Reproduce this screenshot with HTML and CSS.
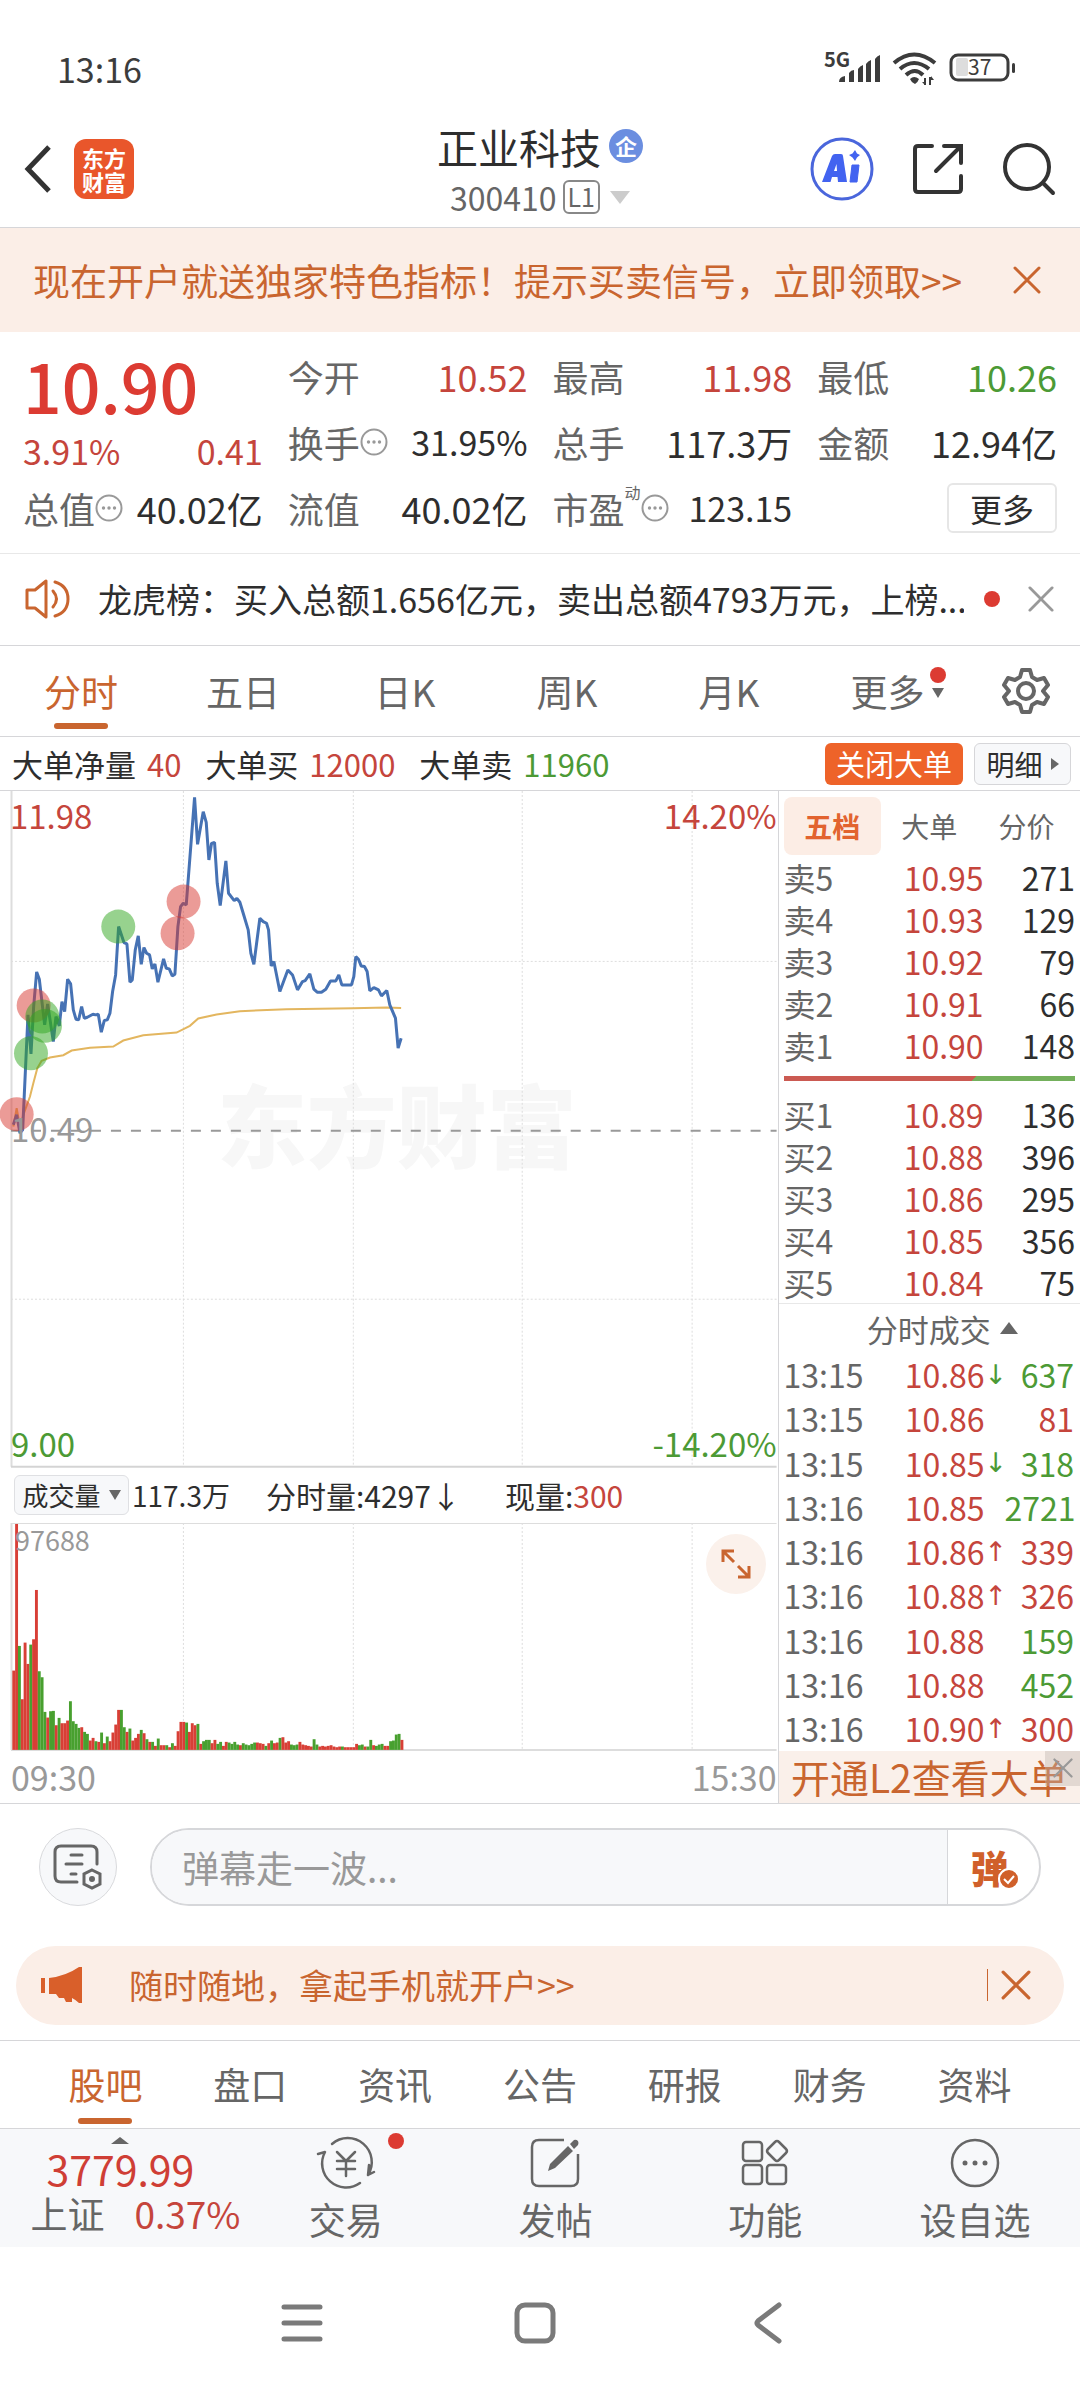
FILE: index.html
```html
<!DOCTYPE html>
<html lang="zh-CN">
<head>
<meta charset="utf-8">
<meta name="viewport" content="width=device-width">
<title>正业科技 300410</title>
<link rel="stylesheet" href="styles.css">
</head>
<body>
<svg class="defs" aria-hidden="true">
  <symbol id="more-dots" viewBox="0 0 28 28"><circle cx="14" cy="14" r="12.5" fill="none" stroke="#999" stroke-width="2"/><g fill="#999"><circle cx="8.500" cy="14" r="1.700"/><circle cx="14" cy="14" r="1.700"/><circle cx="19.500" cy="14" r="1.700"/></g></symbol>
  <symbol id="cross" viewBox="0 0 28 28"><path d="M2 2L26 26M26 2L2 26" fill="none" stroke="currentColor" stroke-width="3" stroke-linecap="round"/></symbol>
</svg>

<div class="status">
  <span class="clock">13:16</span>
  <svg class="status-icons" viewBox="0 0 196 34" aria-label="5G 信号，电量 37">
    <text x="0" y="15" class="sig-text">5G</text>
    <g fill="#3c3c3c">
      <path d="M15 30q0-5 6-6v6zM25 30v-9q2-3 5-3v12zM34 30v-13q2-3 5-4v17zM42 30v-18q2-3 5-4v22zM51 30v-23q2-3 5-4v27z"/>
      <path d="M86 27q4-4 9 0q-1 3-4 5q-4-2-5-5z"/>
      <path d="M100 26h2v7h-2zM105 25h2v8h-2zM98 30h3v3zM107 24l3 4h-3z"/>
      <rect x="188" y="11" width="3" height="10" rx="1.500"/>
    </g>
    <g fill="none" stroke="#3c3c3c" stroke-width="4">
      <path d="M70 11Q90-6 111 11M76 17Q90 5 105 17M82 23Q91 15 99 23"/>
    </g>
    <rect x="132" y="6" width="12" height="18" rx="2" fill="#ddd"/>
    <rect x="127" y="3" width="57" height="25" rx="7" fill="none" stroke="#3c3c3c" stroke-width="3"/>
    <text x="144" y="23" class="bat-text">37</text>
  </svg>
</div>

<header class="header">
  <div class="header-left">
    <button class="icon-btn" aria-label="返回"><svg width="30" height="50" viewBox="0 0 30 50"><path d="M25 3L4 25L25 47" fill="none" stroke="#333" stroke-width="5"/></svg></button>
    <a href="#" class="logo">东方<br>财富</a>
  </div>
  <div class="title">
    <h1>正业科技<span class="corp">企</span></h1>
    <button class="code">300410<span class="level">L1</span><i class="caret"></i></button>
  </div>
  <div class="header-right">
    <button class="icon-btn" aria-label="Ai"><svg width="64" height="64" viewBox="0 0 64 64"><circle cx="32" cy="32" r="30" fill="#fff" stroke="#4a66dc" stroke-width="3"/><g fill="#4263f0" stroke="#4263f0" stroke-linejoin="round"><path stroke="none" fill-rule="evenodd" d="M12 45L22 19Q23 17 25 17H31Q33 17 33 19L37 45H28L27.500 40H22L20.500 45zM24 34H27L26.500 27z"/><path d="M42 28H49L47 45H40z"/><path stroke="none" d="M45 13L47 16.500L50 18L47 20.500L45 24L42.500 20.500L39 18L42.500 16.500z"/></g></svg></button>
    <button class="icon-btn" aria-label="分享"><svg width="52" height="52" viewBox="0 0 52 52"><path d="M20 3H6Q3 3 3 6V46Q3 49 6 49H46Q49 49 49 46V33M32 3H49V20M49 3L24 28" fill="none" stroke="#333" stroke-width="4" stroke-linecap="round"/></svg></button>
    <button class="icon-btn" aria-label="搜索"><svg width="54" height="54" viewBox="0 0 54 54"><circle cx="25" cy="25" r="22" fill="none" stroke="#333" stroke-width="4"/><path d="M41 41L51 51" stroke="#333" stroke-width="4" stroke-linecap="round"/></svg></button>
  </div>
</header>

<aside class="banner">
  <a href="#">现在开户就送独家特色指标！提示买卖信号，立即领取&gt;&gt;</a>
  <button class="icon-btn" aria-label="关闭"><svg width="28" height="28"><use href="#cross"/></svg></button>
</aside>

<section class="quote">
  <div class="quote-main">
    <strong class="price">10.90</strong>
    <div class="item change up"><span>3.91%</span><span>0.41</span></div>
    <div class="item"><span class="k">总值<svg class="dots"><use href="#more-dots"/></svg></span><span>40.02亿</span></div>
  </div>
  <div class="quote-col">
    <div class="item"><span class="k">今开</span><span class="up">10.52</span></div>
    <div class="item"><span class="k">换手<svg class="dots"><use href="#more-dots"/></svg></span><span class="pct">31.95%</span></div>
    <div class="item"><span class="k">流值</span><span>40.02亿</span></div>
  </div>
  <div class="quote-col">
    <div class="item"><span class="k">最高</span><span class="up">11.98</span></div>
    <div class="item"><span class="k">总手</span><span>117.3万</span></div>
    <div class="item"><span class="k">市盈<sup>动</sup><svg class="dots"><use href="#more-dots"/></svg></span><span class="pct">123.15</span></div>
  </div>
  <div class="quote-col">
    <div class="item"><span class="k">最低</span><span class="down">10.26</span></div>
    <div class="item"><span class="k">金额</span><span>12.94亿</span></div>
    <div class="item end"><button class="more-btn">更多</button></div>
  </div>
</section>

<section class="news">
  <svg width="46" height="40" viewBox="0 0 46 40" fill="none" stroke="#c9652f" stroke-width="3" stroke-linejoin="round" stroke-linecap="round"><path d="M2 11H10L21 2V38L10 29H2zM28 12Q35 20 28 28M30 3Q43 7 43 20Q43 33 30 37"/></svg>
  <a href="#">龙虎榜：买入总额1.656亿元，卖出总额4793万元，上榜...</a>
  <i class="dot"></i>
  <button class="icon-btn grey" aria-label="关闭"><svg width="26" height="26"><use href="#cross"/></svg></button>
</section>

<nav class="periods">
  <button class="on">分时</button><button>五日</button><button>日K</button><button>周K</button><button>月K</button>
  <button><span class="more-tab">更多<span class="more-marks"><i class="dot"></i><i class="tri"></i></span></span></button>
  <button class="gear" aria-label="设置"><svg width="48" height="48" viewBox="0 0 48 48" fill="none" stroke="#666" stroke-width="4" stroke-linejoin="round"><path d="M20 3H28L30 10L35 13L42 11L46 18L41 24L46 30L42 37L35 35L30 38L28 45H20L18 38L13 35L6 37L2 30L7 24L2 18L6 11L13 13L18 10z"/><circle cx="24" cy="24" r="8"/></svg></button>
</nav>

<section class="big-orders">
  <span>大单净量 <b class="up">40</b></span>
  <span>大单买 <b class="up">12000</b></span>
  <span>大单卖 <b class="down">11960</b></span>
  <button class="btn-close-big">关闭大单</button>
  <button class="btn-detail">明细<i class="tri-right"></i></button>
</section>

<main class="board">
  <div class="charts">
    <svg class="price-chart" viewBox="0 0 778 677" role="img" aria-label="分时走势">
      <text x="397" y="370" class="watermark">东方财富</text>
      <g stroke="#ddd" stroke-width="1" stroke-dasharray="2 2">
        <path d="M183.500 0V676M353.500 0V676M522.500 0V676M692.500 0V676M11 170.500H777M11 508.500H777"/>
      </g>
      <path d="M11.500 0V676" stroke="#ddd" stroke-width="2"/><path d="M11 676H777" stroke="#d4d4d4" stroke-width="2"/>
      <path d="M11 340H777" stroke="#999" stroke-width="2" stroke-dasharray="10 10"/>
      <g transform="translate(0,-11) scale(0.33333)">
        <polyline fill="none" stroke="#e3b65f" stroke-width="6" points="40,1040 50,985 60,1040 72,1000 90,950 100,910 112,865 125,843 150,833 190,826 215,812 270,804 340,800 370,782 430,766 530,758 570,738 595,716 650,704 720,694 860,688 1060,685 1160,683 1204,684"/>
        <polyline fill="none" stroke="#4672b4" stroke-width="9" stroke-linejoin="bevel" points="40,1035 50,1005 60,1060 68,1050 84,705 93,822 101,680 110,576 118,598 134,735 143,672 160,785 168,710 178,738 186,665 194,695 203,598 212,612 220,690 228,718 236,720 245,680 253,715 262,712 279,703 287,705 295,703 304,757 313,722 322,720 330,700 338,635 347,585 356,440 372,488 381,492 390,607 397,600 406,510 415,468 424,553 432,503 440,520 449,525 457,567 465,552 474,607 491,537 499,565 508,567 517,588 525,583 534,440 542,380 550,370 559,375 584,52 593,193 610,95 619,127 627,240 635,190 644,187 652,310 661,377 678,243 686,340 703,362 711,355 720,367 730,400 745,450 753,520 762,553 780,415 790,425 800,430 806,450 814,558 822,545 840,635 864,570 878,585 893,630 908,605 916,602 930,582 942,628 952,637 965,637 978,628 992,603 1008,603 1017,585 1026,615 1055,615 1062,590 1068,530 1076,538 1084,558 1094,560 1102,575 1110,633 1122,623 1136,630 1145,648 1161,632 1170,675 1187,715 1195,805 1204,775"/>
        <g fill="#d8372f" fill-opacity=".5"><circle cx="50" cy="1003" r="51"/><circle cx="101" cy="677" r="51"/><circle cx="551" cy="365" r="51"/><circle cx="533" cy="460" r="51"/></g>
        <g fill="#2fa51e" fill-opacity=".5"><circle cx="355" cy="440" r="51"/><circle cx="127" cy="710" r="51"/><circle cx="135" cy="738" r="51"/><circle cx="93" cy="820" r="51"/></g>
      </g>
      <text x="10" y="38" class="t-up">11.98</text>
      <text x="777" y="38" class="t-up t-end">14.20%</text>
      <text x="11" y="351" class="t-mid">10.49</text>
      <text x="11" y="666" class="t-down">9.00</text>
      <text x="777" y="666" class="t-down t-end">-14.20%</text>
    </svg>
    <div class="vol-head">
      <button class="vol-select">成交量<i class="tri"></i></button>
      <span class="vol-total">117.3万</span><span class="vol-min">分时量:4297↓</span><span>现量:<b class="up">300</b></span>
    </div>
    <div class="vol-wrap">
      <svg class="vol-chart" viewBox="0 0 778 228" role="img" aria-label="成交量">
        <g stroke="#ddd" stroke-width="1" stroke-dasharray="2 2"><path d="M183.500 0V227M353.500 0V227M522.500 0V227M692.500 0V227"/></g>
        <path d="M11 .5H777" stroke="#ddd"/><path d="M11.500 0V227M11 227H777" stroke="#ddd" stroke-width="2" fill="none"/>
        <g id="bars"></g>
        <text x="15" y="28" class="t-vol">97688</text>
      </svg>
      <button class="expand" aria-label="展开"><svg width="32" height="32" viewBox="0 0 32 32" fill="none" stroke="#c9652f" stroke-width="3"><path d="M14 3H3V14M3 3L14 14M18 29H29V18M29 29L18 18"/></svg></button>
    </div>
    <div class="axis"><span>09:30</span><span>15:30</span></div>
  </div>

  <div class="panel">
    <div class="panel-tabs"><button class="on">五档</button><button>大单</button><button>分价</button></div>
    <table class="book">
      <tr><th>卖5</th><td class="up">10.95</td><td>271</td></tr>
      <tr><th>卖4</th><td class="up">10.93</td><td>129</td></tr>
      <tr><th>卖3</th><td class="up">10.92</td><td>79</td></tr>
      <tr><th>卖2</th><td class="up">10.91</td><td>66</td></tr>
      <tr><th>卖1</th><td class="up">10.90</td><td>148</td></tr>
    </table>
    <div class="ratio"></div>
    <table class="book">
      <tr><th>买1</th><td class="up">10.89</td><td>136</td></tr>
      <tr><th>买2</th><td class="up">10.88</td><td>396</td></tr>
      <tr><th>买3</th><td class="up">10.86</td><td>295</td></tr>
      <tr><th>买4</th><td class="up">10.85</td><td>356</td></tr>
      <tr><th>买5</th><td class="up">10.84</td><td>75</td></tr>
    </table>
    <button class="trades-head">分时成交<i class="tri-up"></i></button>
    <table class="trades">
      <tr><th>13:15</th><td class="up">10.86</td><td class="arrow down">↓</td><td class="down">637</td></tr>
      <tr><th>13:15</th><td class="up">10.86</td><td class="arrow"></td><td class="up">81</td></tr>
      <tr><th>13:15</th><td class="up">10.85</td><td class="arrow down">↓</td><td class="down">318</td></tr>
      <tr><th>13:16</th><td class="up">10.85</td><td class="arrow"></td><td class="down">2721</td></tr>
      <tr><th>13:16</th><td class="up">10.86</td><td class="arrow up">↑</td><td class="up">339</td></tr>
      <tr><th>13:16</th><td class="up">10.88</td><td class="arrow up">↑</td><td class="up">326</td></tr>
      <tr><th>13:16</th><td class="up">10.88</td><td class="arrow"></td><td class="down">159</td></tr>
      <tr><th>13:16</th><td class="up">10.88</td><td class="arrow"></td><td class="down">452</td></tr>
      <tr><th>13:16</th><td class="up">10.90</td><td class="arrow up">↑</td><td class="up">300</td></tr>
    </table>
    <div class="promo"><a href="#">开通L2查看大单</a><button class="promo-x" aria-label="关闭"><svg width="20" height="20"><use href="#cross"/></svg></button></div>
  </div>
</main>

<section class="danmu">
  <button class="danmu-set" aria-label="弹幕设置"><svg width="50" height="46" viewBox="0 0 50 46" fill="none" stroke="#666" stroke-width="3" stroke-linecap="round"><path d="M24 38H8Q2 38 2 32V8Q2 2 8 2H38Q44 2 44 8V20M18 11H29M13 20H29M18 30H23"/><path d="M39 26L47 30V40L39 44L31 40V30z"/><circle cx="39" cy="35" r="1.500" fill="#666"/></svg></button>
  <div class="danmu-box">
    <input type="text" placeholder="弹幕走一波..." aria-label="弹幕">
    <button class="danmu-toggle" aria-label="弹幕开关">弹<svg class="check" width="22" height="22" viewBox="0 0 22 22"><circle cx="11" cy="11" r="10" fill="#d0602a" stroke="#fff" stroke-width="2"/><path d="M6 11L10 15L16 8" fill="none" stroke="#fff" stroke-width="2"/></svg></button>
  </div>
</section>

<aside class="open-account">
  <svg width="42" height="36" viewBox="0 0 42 36" fill="#d95f2a"><path d="M0 11H4V26H0zM8 11Q25 9 38 0H41V36H38Q35 33 31 31V35H25L23 31H18L15 27H8z"/></svg>
  <a href="#">随时随地，拿起手机就开户&gt;&gt;</a>
  <button class="icon-btn" aria-label="关闭"><svg width="30" height="30"><use href="#cross"/></svg></button>
</aside>

<nav class="sections">
  <button class="on">股吧</button><button>盘口</button><button>资讯</button><button>公告</button><button>研报</button><button>财务</button><button>资料</button>
</nav>

<footer class="toolbar">
  <button class="index">
    <i class="tri-up"></i>
    <strong>3779.99</strong>
    <span class="index-row"><span>上证</span><span class="up">0.37%</span></span>
  </button>
  <button class="tool"><svg width="58" height="52" viewBox="0 0 58 52" fill="none" stroke="#666" stroke-width="2.500" stroke-linecap="round" stroke-linejoin="round"><path d="M15 7A24 24 0 0 1 51 38M51 38L57 35M51 38L52 28M43 46A24 24 0 0 1 8 15L1 17M20 15L29 24L38 15M29 24V39M20 24H38M20 32H38"/></svg>交易<i class="dot"></i></button>
  <button class="tool"><svg width="50" height="52" viewBox="0 0 50 52"><path d="M34 3H9Q2 3 2 10V42Q2 49 9 49H41Q48 49 48 42V17" fill="none" stroke="#666" stroke-width="2.500"/><path d="M18 34L20 27L38 9L43 14L25 31zM40 7L44 3Q46 2 48 4Q49 6 48 8L44 12z" fill="#666"/></svg>发帖</button>
  <button class="tool"><svg width="48" height="52" viewBox="0 0 48 52" fill="none" stroke="#666" stroke-width="2.500"><rect x="2" y="5" width="19" height="19" rx="3"/><rect x="2" y="28" width="19" height="19" rx="3"/><rect x="26" y="28" width="19" height="19" rx="3"/><path d="M34 5Q36 3 38 5L45 12Q47 14 45 16L38 23Q36 25 34 23L27 16Q25 14 27 12z"/></svg>功能</button>
  <button class="tool"><svg width="52" height="52" viewBox="0 0 52 52"><circle cx="26" cy="26" r="23" fill="none" stroke="#666" stroke-width="2.500"/><g fill="#666"><circle cx="16" cy="26" r="2.500"/><circle cx="26" cy="26" r="2.500"/><circle cx="36" cy="26" r="2.500"/></g></svg>设自选</button>
</footer>

<nav class="sysnav">
  <button class="icon-btn" aria-label="菜单"><svg width="42" height="42" viewBox="0 0 42 42"><path d="M3 5H39M3 21H39M3 37H39" stroke="#7a7a7a" stroke-width="5" stroke-linecap="round"/></svg></button>
  <button class="icon-btn" aria-label="主页"><svg width="42" height="42" viewBox="0 0 42 42"><rect x="3" y="3" width="36" height="36" rx="8" fill="none" stroke="#7a7a7a" stroke-width="5"/></svg></button>
  <button class="icon-btn" aria-label="返回"><svg width="42" height="42" viewBox="0 0 42 42"><path d="M32 3L11 19Q9 21 11 23L32 39" fill="none" stroke="#7a7a7a" stroke-width="5" stroke-linecap="round"/></svg></button>
</nav>
<script src="bars.js"></script>
</body>
</html>
```

FILE: styles.css
```css
* { box-sizing: border-box; }
body {
  margin: 0;
  background: #fff;
  color: #2e2e2e;
  font-family: "Noto Sans CJK SC", "Noto Sans", sans-serif;
  font-size: 36px;
  line-height: 1;
}
button, input { font: inherit; color: inherit; background: none; border: 0; padding: 0; margin: 0; }
button { cursor: pointer; white-space: nowrap; }
a { color: inherit; text-decoration: none; }
b { font-weight: 400; }
svg { display: block; flex: none; overflow: visible; }
.defs { position: absolute; width: 0; height: 0; }
.up { color: #c5453c; }
.down { color: #4c9a35; }
.icon-btn { display: flex; align-items: center; justify-content: center; }
.dot { width: 16px; height: 16px; border-radius: 50%; background: #dc3b32; flex: none; }

.tri, .tri-up, .caret, .tri-right { width: 0; height: 0; flex: none; border: 6px solid transparent; }
.tri { border-top: 10px solid #666; border-bottom: 0; }
.tri-up { border-width: 9px; border-top-width: 0; border-bottom: 12px solid #666; }
.caret { border-width: 10px; border-bottom-width: 0; border-top: 13px solid #ccc; }
.tri-right { border-left: 8px solid #666; border-right: 0; }

/* status bar */
.status { display: flex; justify-content: space-between; align-items: center; height: 111px; padding: 26px 60px 0 57px; color: #3c3c3c; }
.clock { font-size: 34px; }
.status-icons { width: 196px; height: 34px; }
.sig-text { font-size: 20px; font-weight: 700; fill: #3c3c3c; }
.bat-text { font-size: 21px; fill: #3c3c3c; }

/* header */
.header { display: grid; grid-template-columns: 1fr auto 1fr; align-items: center; height: 117px; padding: 0 24px; border-bottom: 1px solid #d6d6d9; }
.header-left, .header-right { display: flex; align-items: center; }
.header-left { gap: 20px; }
.header-right { justify-content: flex-end; gap: 38px; }
.logo { display: grid; place-content: center; width: 60px; height: 60px; border-radius: 12px; background: #e9562b; color: #fff; font-size: 22px; font-weight: 700; line-height: 24px; }
.title { display: flex; flex-direction: column; align-items: center; padding-top: 4px; }
h1 { display: flex; align-items: center; gap: 8px; margin: 0; font-size: 41px; font-weight: 400; line-height: 52px; }
.corp { width: 34px; height: 34px; border-radius: 50%; background: #6b8ee0; color: #fff; font-size: 22px; font-weight: 700; line-height: 33px; text-align: center; }
.code { display: flex; align-items: center; gap: 6px; height: 50px; color: #666; font-size: 32px; }
.level { height: 34px; padding: 0 3px; border: 2px solid #888; border-radius: 6px; font-size: 25px; line-height: 29px; }
.caret { margin-left: 4px; }

.banner { display: flex; justify-content: space-between; align-items: center; height: 104px; padding: 0 39px 0 33px; background: #fbeee7; color: #c9652f; font-size: 37px; }

/* quote */
.quote { display: grid; grid-template-columns: repeat(4, 1fr); gap: 25px; padding: 11px 23px 12px; border-bottom: 1px solid #e8e8e8; }
.item { display: flex; justify-content: space-between; align-items: center; height: 66px; white-space: nowrap; }
.quote-main { min-width: 0; }
.price { display: block; height: 84px; color: #dc3b32; font-size: 68px; font-weight: 500; line-height: 84px; }
.change { height: 48px; }
.change, .pct { font-size: 34px; }
.quote .k { display: flex; align-items: center; color: #666; }
.dots { width: 28px; height: 28px; }
sup { align-self: flex-start; width: 16px; font-size: 16px; line-height: 16px; margin-top: -6px; }
.item.end { justify-content: flex-end; }
.more-btn { width: 110px; height: 50px; border: 2px solid #e6e6e6; border-radius: 6px; font-size: 32px; }

.news { display: flex; align-items: center; height: 92px; padding: 0 26px 2px 25px; border-bottom: 1px solid #d6d6d9; font-size: 34px; }
.news a { flex: 1; min-width: 0; margin: 0 20px 0 27px; overflow: hidden; line-height: 52px; white-space: nowrap; }
.news .icon-btn { margin-left: 28px; }
.grey { color: #999; }

/* period tabs */
.periods { display: grid; grid-template-columns: repeat(6, 3fr) 2fr; height: 91px; border-bottom: 1px solid #d6d6d9; color: #666; font-size: 37px; }
.periods button, .sections button { position: relative; display: flex; justify-content: center; align-items: center; }
.on { color: #c9652f; }
.periods .on::after, .sections .on::after { content: ""; position: absolute; bottom: 7px; left: calc(50% - 27px); width: 54px; height: 6px; border-radius: 3px; background: #c9652f; }
.more-tab { display: flex; align-items: center; margin-left: 14px; }
.more-marks { display: flex; flex-direction: column; align-items: center; gap: 5px; width: 16px; margin-left: 5px; padding-bottom: 18px; }

.big-orders { display: flex; align-items: center; gap: 24px; height: 54px; padding: 0 9px 0 12px; border-bottom: 1px solid #d6d6d9; font-size: 31px; white-space: nowrap; }
.big-orders b { margin-left: 4px; }
.btn-close-big { width: 138px; height: 42px; margin: 0 -13px 0 auto; border-radius: 6px; background: #ee6329; color: #fff; font-size: 29px; }
.btn-detail { display: flex; justify-content: center; align-items: center; gap: 8px; width: 97px; height: 42px; border: 1px solid #d6d6d9; border-radius: 6px; background: #f7f8fa; font-size: 28px; }

/* charts and order book */
.board { display: grid; grid-template-columns: 72fr 28fr; border-bottom: 1px solid #d6d6d9; }
.charts { min-width: 0; }
.price-chart, .vol-chart { width: 100%; height: auto; }
.watermark { font-size: 90px; font-weight: 900; fill: #f7f7f7; text-anchor: middle; }
.price-chart text:not(.watermark) { font-size: 33px; }
.t-up { fill: #c5453c; }
.t-down { fill: #4c9a35; }
.t-mid, .t-vol { fill: #999; }
.t-end { text-anchor: end; }
.t-vol { font-size: 27px; }
.vol-head { display: flex; align-items: center; height: 55px; padding-left: 14px; font-size: 30px; white-space: nowrap; }
.vol-select { display: flex; align-items: center; justify-content: center; gap: 8px; width: 115px; height: 40px; margin-right: 3px; border: 1px solid #dfe0e3; border-radius: 6px; background: #f7f8fa; font-size: 26px; }
.vol-total { font-size: 28px; }
.vol-min { margin: 0 44px 0 36px; }
.vol-wrap { position: relative; }
.expand { position: absolute; top: 11px; right: 12px; display: grid; place-content: center; width: 60px; height: 60px; border-radius: 50%; background: #fbf1eb; }
.axis { display: flex; justify-content: space-between; align-items: center; height: 52px; padding: 0 1px 0 11px; color: #999; font-size: 34px; }

.panel { display: flex; flex-direction: column; min-width: 0; border-left: 1px solid #d6d6d9; }
.panel-tabs { display: grid; grid-template-columns: repeat(3, 1fr); height: 65px; padding: 6px 5px 1px; color: #666; font-size: 28px; }
.panel-tabs .on { border-radius: 8px; background: #fcede5; color: #e2632f; font-weight: 700; }
table { border-collapse: collapse; table-layout: fixed; width: 100%; }
th, td { padding: 0; font-weight: 400; text-align: right; }
th { color: #666; text-align: left; }
.book, .trades { font-size: 32px; }
.book tr { height: 42px; }
.book th { width: 87px; padding-left: 5px; }
.book td:last-child { padding-right: 5px; }
.book td:nth-child(2) { width: 118px; }
.ratio { height: 5px; margin: 10px 5px 12px; background: linear-gradient(135deg, #cb5a52 65%, #74b05c 65%); }
.trades-head { display: flex; justify-content: center; align-items: center; gap: 9px; height: 49px; padding-left: 26px; border-top: 1px solid #e8e8e8; color: #666; font-size: 31px; }
.trades { flex: 1; }
.trades tr { height: 44px; }
.trades th { width: 90px; padding-left: 5px; }
.trades td:nth-child(2) { width: 116px; }
.trades .arrow { width: 20px; font-family: "DejaVu Sans", sans-serif; font-size: 27px; text-align: center; }
.trades td:last-child { padding-right: 6px; }
.promo { position: relative; display: flex; align-items: center; justify-content: center; height: 52px; background: #faf0ea; color: #c9652f; font-size: 39px; white-space: nowrap; }
.promo-x { position: absolute; top: 0; right: 0; display: grid; place-content: center; width: 35px; height: 35px; background: rgba(190, 180, 175, .4); color: #999; }

/* danmu */
.danmu { display: flex; justify-content: space-between; padding: 24px 39px 40px; }
.danmu-set { display: grid; place-content: center; width: 78px; height: 78px; border: 1px solid #d9dadd; border-radius: 50%; background: #f7f8fa; }
.danmu-box { display: flex; flex: 1; height: 78px; margin-left: 33px; border: 2px solid #d6d7da; border-radius: 39px; overflow: hidden; }
.danmu-box input { flex: 1; min-width: 0; padding-left: 30px; background: #f7f8fa; font-size: 37px; outline: 0; }
.danmu-box input::placeholder { color: #999; opacity: 1; }
.danmu-toggle { position: relative; width: 92px; padding-right: 8px; border-left: 1px solid #d6d7da; color: #d0602a; font-size: 38px; font-weight: 900; }
.check { position: absolute; right: 19px; bottom: 14px; }

.open-account { display: flex; align-items: center; height: 79px; margin: 0 16px 15px; padding: 0 33px 0 25px; border-radius: 40px; background: #fbeee7; color: #c9652f; font-size: 34px; }
.open-account a { flex: 1; margin-left: 46px; }
.open-account .icon-btn { height: 32px; padding-left: 13px; border-left: 1px solid #c9652f; }

.sections { display: grid; grid-template-columns: repeat(7, 1fr); height: 89px; padding: 0 33px; border-top: 1px solid #d6d6d9; border-bottom: 1px solid #d6d6d9; color: #666; font-size: 37px; }
.sections .on::after { bottom: 4px; }

/* toolbar */
.toolbar { display: grid; grid-template-columns: 241fr repeat(4, 210fr); height: 118px; background: #f7f8fa; color: #666; font-size: 37px; }
.index { display: flex; flex-direction: column; align-items: center; padding-top: 8px; }
.index .tri-up { border-bottom-width: 7px; }
.index strong { height: 49px; color: #cf3e35; font-size: 41px; font-weight: 400; line-height: 49px; }
.index-row { display: flex; gap: 30px; padding-left: 30px; font-size: 37px; line-height: 40px; }
.tool { position: relative; display: flex; flex-direction: column; align-items: center; gap: 10px; padding-top: 8px; line-height: 40px; }
.tool .dot { position: absolute; top: 4px; left: calc(50% + 42px); }

.sysnav { display: flex; justify-content: center; gap: 191px; height: 153px; padding-right: 10px; }
```

FILE: bars.js
```js
// One entry per minute: colour (r/g) and bar height out of 678.
const data = ("r238 r678 g312 r152 r322 r258 g316 r332 r480 g236 g218 g114 r97 g116 g117 r74 g96 r80 r80 r88 " +
  "g146 g86 g78 g66 r68 g54 g48 r28 r36 g26 r24 g52 r20 g40 r26 r52 r76 r120 g120 g68 " +
  "r54 g64 r28 r36 r48 g60 r50 g32 r24 g24 r12 g34 r14 r14 g14 r8 g20 r12 r56 r84 " +
  "r84 g82 r54 r80 r74 g78 r18 g26 g30 g30 r20 r30 g18 g24 r12 r24 g22 g18 g24 g16 " +
  "r14 g20 g16 g14 g18 g22 r22 r20 r18 g12 r20 g28 r20 r22 g36 r38 r22 r26 g16 g14 " +
  "g16 r24 r16 r14 r12 r10 g32 g16 r10 r12 r10 r12 r14 r10 r8 r10 g10 r8 r8 r8 " +
  "r8 r18 g14 g16 r10 g10 g30 r14 g12 g16 g18 r12 r12 g26 g28 g46 g48 r30").split(" ");
const svgNs = "http://www.w3.org/2000/svg";
const group = document.getElementById("bars");
data.forEach((entry, i) => {
  const height = Number(entry.slice(1)) / 3;
  const bar = document.createElementNS(svgNs, "rect");
  bar.setAttribute("x", 12.3 + i * 2.835);
  bar.setAttribute("y", 227 - height);
  bar.setAttribute("width", 2.9);
  bar.setAttribute("height", height);
  bar.setAttribute("fill", entry[0] === "r" ? "#d83f36" : "#48a02f");
  group.appendChild(bar);
});
```
